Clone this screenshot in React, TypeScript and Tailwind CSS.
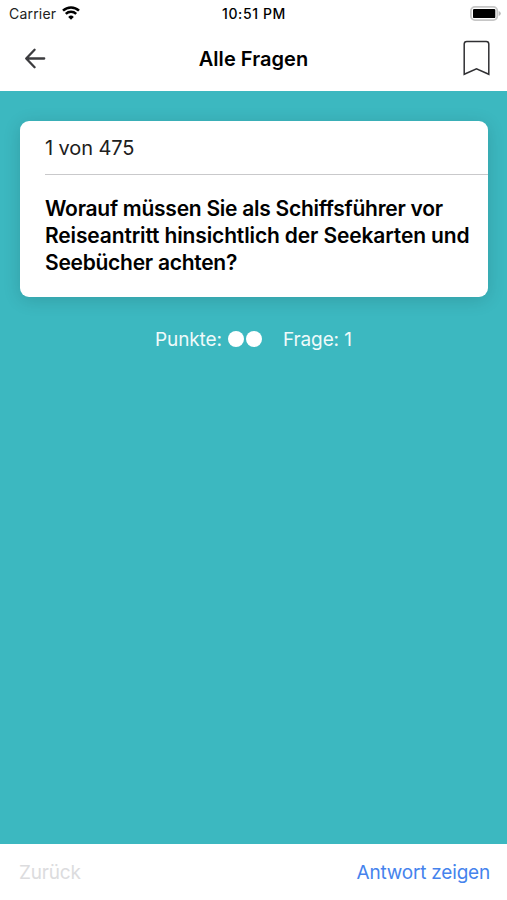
function WifiIcon() {
  return (
    <svg className="-mt-[3px] h-[15px] w-[18px]" viewBox="0 0 18 15" fill="none" stroke="#000" strokeWidth="2.5">
      <path d="M1 5.6a11.6 11.6 0 0 1 16 0" />
      <path d="M3.8 8.9a7.6 7.6 0 0 1 10.4 0" />
      <path d="M6.2 11.9a4.1 4.1 0 0 1 5.6 0L9 14.7z" fill="#000" stroke="none" />
    </svg>
  );
}

function BatteryIcon() {
  return (
    <svg className="-mt-[2px] h-[15px] w-[32px]" viewBox="0 0 32 15">
      <rect x="0.9" y="0.9" width="26.4" height="13.2" rx="4" fill="#fff" stroke="#c6c6c6" strokeWidth="1.8" />
      <rect x="3" y="2.9" width="22.3" height="9.2" rx="1.2" fill="#000" />
      <path d="M28.7 5q2.1 .8 2.1 2.5t-2.1 2.5z" fill="#b8b8b8" />
    </svg>
  );
}

export default function App() {
  return (
    <div className="flex h-[900px] w-[507px] flex-col overflow-hidden bg-[#3cb8c0] font-['Inter','Liberation_Sans',sans-serif] text-black">
      <header className="h-[91px] shrink-0 bg-white">
        <div className="grid h-7 grid-cols-[1fr_80px_1fr] items-center pr-[5px] pl-[7px] text-[14px]">
          <div className="flex items-center gap-[6px] pl-[2px] text-[#222]">
            <span className="-mt-[2px] tracking-[0.2px]">Carrier</span>
            <WifiIcon />
          </div>
          <div className="-mt-[2px] -ml-px text-center font-medium tracking-[0.6px] whitespace-nowrap">10:51 PM</div>
          <div className="flex justify-end"><BatteryIcon /></div>
        </div>
        <div className="grid h-[61px] grid-cols-[1fr_120px_1fr] items-center pr-[16px] pl-[24px]">
          <button className="w-6" aria-label="Zurück">
            <svg className="h-[22px] w-[22px]" viewBox="0 0 22 22" fill="none" stroke="#3c3c3f" strokeWidth="2.3" strokeLinecap="round" strokeLinejoin="round">
              <path d="M10.6 1.8 2.2 10.5l8.4 8.7M2.4 10.5h17.8" />
            </svg>
          </button>
          <h1 className="-ml-[8px] text-center text-[20px] font-semibold tracking-[0.05px] whitespace-nowrap">Alle Fragen</h1>
          <button className="-mt-px flex justify-end" aria-label="Merken">
            <svg className="h-[36px] w-[28px]" viewBox="0 0 28 36" fill="none" stroke="#303033" strokeWidth="1.5">
              <path d="M1.2 34.3V4q0-2.6 2.6-2.6h19.4q2.6 0 2.6 2.6v30.3L13.5 28.8z" />
            </svg>
          </button>
        </div>
      </header>

      <main className="flex-1 px-5 pt-[30px]">
        <section className="h-[176px] w-[468px] overflow-hidden rounded-[9px] bg-white pl-[25px] shadow-[0_3px_18px_rgba(0,0,0,0.14)]">
          <div className="flex h-[54px] items-center border-b border-[#c9c9cb] text-[20px] tracking-[-0.1px] text-[#202020]">
            1 von 475
          </div>
          <p className="pt-[20px] text-[21px] leading-[27px] font-semibold whitespace-nowrap">
            <span className="block tracking-[-0.26px]">Worauf müssen Sie als Schiffsführer vor</span>
            <span className="block tracking-[-0.14px]">Reiseantritt hinsichtlich der Seekarten und</span>
            <span className="block tracking-[-0.27px]">Seebücher achten?</span>
          </p>
        </section>
        <div className="mt-[29px] flex h-7 items-center pl-[135px] text-[19px] tracking-[-0.1px] text-[#effafa]">
          <span>Punkte:</span>
          <span className="-mt-[2px] ml-[6px] flex gap-[2px]">
            <i className="size-4 rounded-full bg-white" />
            <i className="size-4 rounded-full bg-white" />
          </span>
          <span className="ml-[21px]">Frage: 1</span>
        </div>
      </main>

      <footer className="flex h-[56px] shrink-0 items-center justify-between bg-white pt-[3px] pr-[17px] pl-[19px] text-[19px] tracking-[-0.2px]">
        <span className="text-[#dcdcde]">Zurück</span>
        <button className="text-[#4583ed]">Antwort zeigen</button>
      </footer>
    </div>
  );
}
